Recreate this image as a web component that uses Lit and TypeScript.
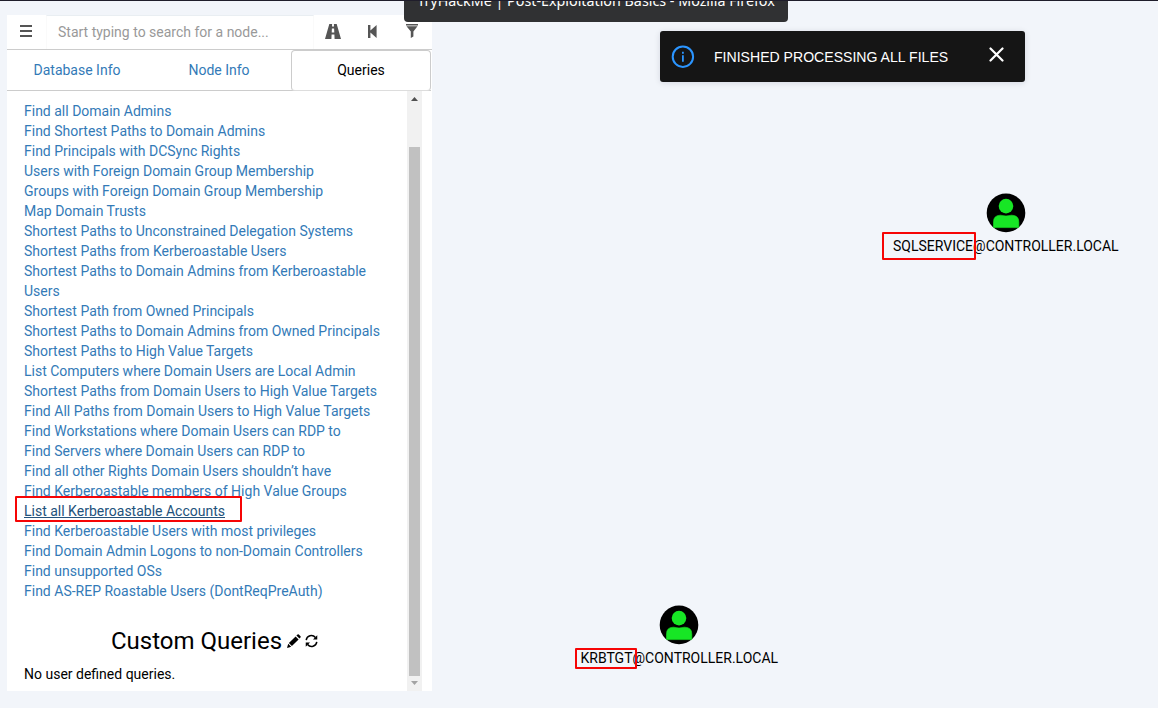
import { LitElement, html, css, svg } from "lit";
import { customElement } from "lit/decorators.js";
import { classMap } from "lit/directives/class-map.js";

const QUERIES = [
  "Find all Domain Admins",
  "Find Shortest Paths to Domain Admins",
  "Find Principals with DCSync Rights",
  "Users with Foreign Domain Group Membership",
  "Groups with Foreign Domain Group Membership",
  "Map Domain Trusts",
  "Shortest Paths to Unconstrained Delegation Systems",
  "Shortest Paths from Kerberoastable Users",
  "Shortest Paths to Domain Admins from Kerberoastable Users",
  "Shortest Path from Owned Principals",
  "Shortest Paths to Domain Admins from Owned Principals",
  "Shortest Paths to High Value Targets",
  "List Computers where Domain Users are Local Admin",
  "Shortest Paths from Domain Users to High Value Targets",
  "Find All Paths from Domain Users to High Value Targets",
  "Find Workstations where Domain Users can RDP to",
  "Find Servers where Domain Users can RDP to",
  "Find all other Rights Domain Users shouldn’t have",
  "Find Kerberoastable members of High Value Groups",
  "List all Kerberoastable Accounts",
  "Find Kerberoastable Users with most privileges",
  "Find Domain Admin Logons to non-Domain Controllers",
  "Find unsupported OSs",
  "Find AS-REP Roastable Users (DontReqPreAuth)",
];
const ACTIVE = "List all Kerberoastable Accounts";

const userShape = svg`
  <g transform="translate(.5 .4)">
    <circle cx="19.5" cy="19.5" r="19.3" fill="#000"/>
    <circle cx="19.5" cy="12.7" r="7.3" fill="#17e625"/>
    <path d="M7 34.2 V28.5 Q7 21.8 14 21.8 Q19.5 23.4 25 21.8 Q32.3 21.8 32.3 28.5 V34.2 Z" fill="#17e625" stroke="#17e625" stroke-width=".6" stroke-linejoin="round"/>
  </g>`;

@customElement("search-bar")
export class SearchBar extends LitElement {
  static styles = css`
    :host { display: flex; height: 34px; border-bottom: 1px solid #ccc; color: #555; }
    .cell { width: 39px; display: flex; align-items: center; justify-content: center; padding: 0 1px 2px 0; box-sizing: border-box; }
    .field {
      flex: 1; display: flex; align-items: center; padding: 0 0 2px 11px; color: #999;
      font-size: 14px; border-top: 1px solid #e9eef2; border-left: 1px solid #fafafa;
      border-right: 1px solid #fafafa; box-sizing: border-box;
    }
    .last { width: 40px; }
    svg { display: block; }
  `;
  render() {
    return html`
      <div class="cell">
        <svg width="12" height="12" fill="currentColor"><path d="M0 0h12v2H0zM0 5h12v2H0zM0 10h12v2H0z"/></svg>
      </div>
      <div class="field">Start typing to search for a node...</div>
      <div class="cell">
        <svg width="16" height="15" viewBox="0 0 16 15" fill="currentColor">
          <path fill-rule="evenodd" d="M4.3 0H7.1L7 2.5H9L8.9 0H11.7L16 15H9.6L9.4 10.6H6.6L6.4 15H0ZM6.9 4.4 6.7 8.4H9.3L9.1 4.4Z"/>
        </svg>
      </div>
      <div class="cell">
        <svg width="9" height="13" fill="currentColor"><path d="M0 0h2.4v5.6L8.6 0v13L2.4 7.4V13H0z"/></svg>
      </div>
      <div class="cell last">
        <svg width="12" height="14" fill="currentColor"><path d="M0 0h12v1.4H0zM.5 2.2h11L7.4 7.6v4.8L4.8 14V7.6z"/></svg>
      </div>
    `;
  }
}

@customElement("query-list")
export class QueryList extends LitElement {
  static styles = css`
    :host { display: flex; flex: 1; min-height: 0; line-height: 20px; }
    .content { width: 366px; padding: 10px 17px 0; }
    .query { color: #337ab7; }
    .active { color: #23527c; }
    .active span { text-decoration: underline; position: relative; }
    .active span::after {
      content: ""; position: absolute; left: -9px; right: -17px; top: -7px; height: 22px;
      border: 2px solid #f60505; border-radius: 1px;
    }
    .heading {
      display: flex; align-items: center; justify-content: center; height: 26px;
      margin: 27px 0 10px; font-size: 24px; padding-left: 15px;
    }
    .pencil { margin: 0 0 0 5px; }
    .refresh { margin: 0 0 0 4px; }
    .scroll {
      width: 15px; background: #f1f1f1; display: flex; flex-direction: column;
      align-items: center; box-sizing: border-box; padding: 6px 0 6px;
    }
    .thumb { width: 11px; background: #c1c1c1; flex: 1; margin: 46px 0 5px; }
    svg { display: block; }
  `;
  render() {
    return html`
      <div class="content">
        ${QUERIES.map(
          (q) => html`<div class=${classMap({ query: true, active: q === ACTIVE })}><span>${q}</span></div>`
        )}
        <div class="heading">
          Custom Queries
          <svg class="pencil" width="14" height="14"><path d="M0 14 1.2 9.8 4.2 12.8ZM1.9 9.1 8.6 2.4 11.6 5.4 4.9 12.1ZM9.4 1.6 10.6.4Q11.2 0 11.8.5L13.5 2.2Q14 2.8 13.5 3.4L12.4 4.6Z"/></svg>
          <svg class="refresh" width="13" height="14" viewBox="0 0 14 14" fill="none" stroke="#000" stroke-width="1.6">
            <path d="M1.3 6.1A5.6 5.6 0 0 1 11.2 3.3M12.7 7.9A5.6 5.6 0 0 1 2.8 10.7"/>
            <path d="M13.2.7V5.3H8.6ZM.8 13.3V8.7H5.4Z" fill="#000" stroke="none"/>
          </svg>
        </div>
        <div>No user defined queries.</div>
      </div>
      <div class="scroll">
        <svg width="7" height="4" fill="#505050"><path d="M3.5 0 7 4H0z"/></svg>
        <div class="thumb"></div>
        <svg width="7" height="4" fill="#a3a3a3"><path d="M0 0H7L3.5 4z"/></svg>
      </div>
    `;
  }
}

@customElement("graph-node")
export class GraphNode extends LitElement {
  static properties = { user: {}, domain: {} };
  declare user: string;
  declare domain: string;
  static styles = css`
    :host { display: flex; flex-direction: column; align-items: center; font-size: 14px; line-height: 20px; color: #000; }
    svg { display: block; }
    .label { white-space: nowrap; margin-top: 3px; }
  `;
  render() {
    return html`
      <svg width="40" height="40">${userShape}</svg>
      <div class="label">${this.user}@${this.domain}</div>
    `;
  }
}

@customElement("app-root")
export class AppRoot extends LitElement {
  static styles = css`
    :host {
      display: block; position: relative; width: 1158px; height: 708px; overflow: hidden;
      box-sizing: border-box; background: #f2f5fa; border-top: 1px solid #1f1d2b;
      padding: 14px 0 0 7px; font-family: Roboto, sans-serif; font-size: 14px; color: #000;
    }
    .panel { width: 425px; height: 676px; background: #fff; display: flex; flex-direction: column; }
    .tabs { display: flex; height: 40px; border-bottom: 1px solid #ccc; margin-right: 1px; line-height: 40px; text-align: center; color: #337ab7; }
    .tab { width: 140px; }
    .node { width: 144px; }
    .selected { flex: 1; color: #000; border: 1px solid #ccc; border-radius: 4px; box-sizing: border-box; height: 41px; line-height: 39px; border-bottom-color: #ddd; }
    .title {
      position: absolute; left: 404px; top: -20px; width: 384px; height: 41px; background: #303133;
      border-radius: 4px; color: #fff; font: 14.3px/20px "Noto Sans", sans-serif; text-align: center;
      white-space: nowrap; padding: 10px 0 0 0; box-sizing: border-box;
    }
    .toast {
      position: absolute; left: 660px; top: 30px; width: 365px; height: 51px; box-sizing: border-box;
      background: #151515; border-radius: 3px; display: flex; align-items: center; padding: 0 21px 0 11px;
      box-shadow: 0 1px 6px rgba(0, 0, 50, .12); color: #fff; font: 14.08px "Liberation Sans", sans-serif;
    }
    .message { margin-left: 19px; flex: 1; white-space: nowrap; }
    .close { margin-top: -5px; }
    .sql, .krb, .mark { position: absolute; }
    .sql { left: 893px; top: 192px; }
    .krb { left: 580.5px; top: 604px; }
    .mark { border: 2px solid #f60505; border-radius: 1px; box-sizing: border-box; }
    .mark-sql { left: 882px; top: 231px; width: 94px; height: 28px; }
    .mark-krb { left: 575px; top: 647px; width: 62px; height: 21px; }
    svg { display: block; }
  `;
  render() {
    return html`
      <div class="panel">
        <search-bar></search-bar>
        <div class="tabs">
          <div class="tab">Database Info</div>
          <div class="tab node">Node Info</div>
          <div class="selected">Queries</div>
        </div>
        <query-list></query-list>
      </div>
      <graph-node class="sql" .user=${"SQLSERVICE"} .domain=${"CONTROLLER.LOCAL"}></graph-node>
      <graph-node class="krb" .user=${"KRBTGT"} .domain=${"CONTROLLER.LOCAL"}></graph-node>
      <div class="mark mark-sql"></div>
      <div class="mark mark-krb"></div>
      <div class="title">TryHackMe | Post-Exploitation Basics - Mozilla Firefox</div>
      <div class="toast">
        <svg width="24" height="23" fill="none" stroke="#2b95ff" stroke-width="2">
          <circle cx="11.9" cy="11.7" r="10.2"/><path d="M11.9 10.2v6.5M11.9 6.7v2" stroke-width="1.8"/>
        </svg>
        <span class="message">FINISHED PROCESSING ALL FILES</span>
        <svg class="close" width="15" height="15" stroke="#fff" stroke-width="2.2" stroke-linecap="round"><path d="M1.5 1.5 13.5 13.5M13.5 1.5 1.5 13.5"/></svg>
      </div>
    `;
  }
}
